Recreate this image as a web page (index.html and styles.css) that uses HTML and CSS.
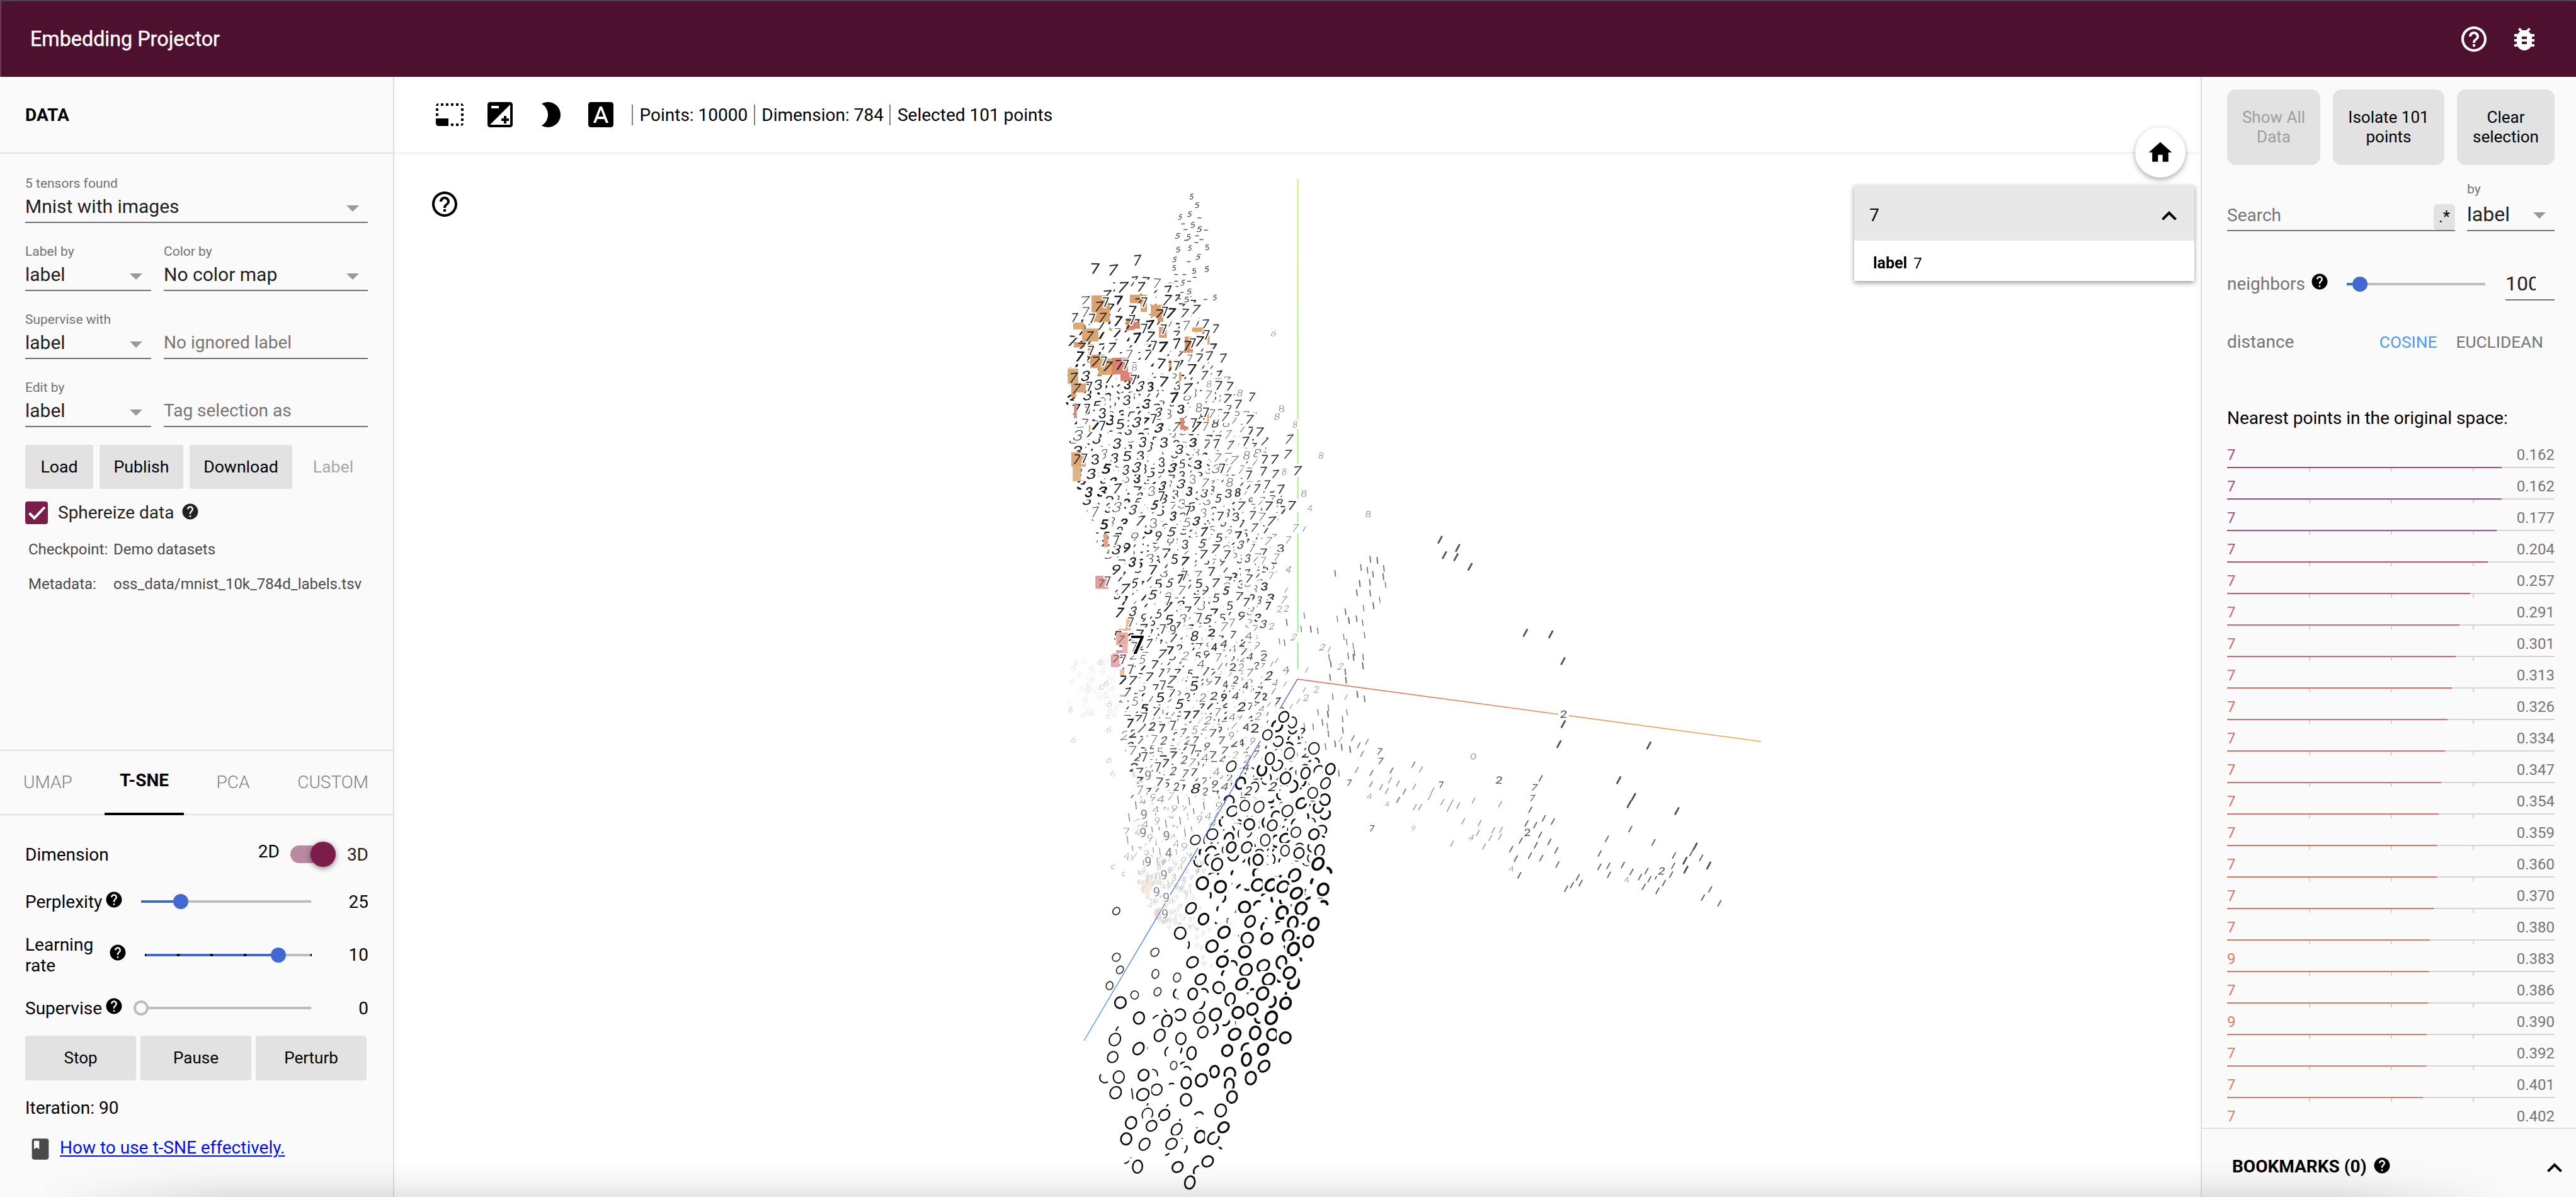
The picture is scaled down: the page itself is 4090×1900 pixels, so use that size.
FILE: index.html
```html
<!DOCTYPE html>
<html lang="en">
<head>
<meta charset="utf-8">
<title>Embedding Projector</title>
<link rel="stylesheet" href="styles.css">
</head>
<body>
<svg class="defs" width="0" height="0">
  <symbol id="help" viewBox="0 0 24 24"><path d="M12 2C6.48 2 2 6.48 2 12s4.48 10 10 10 10-4.48 10-10S17.52 2 12 2zm1 17h-2v-2h2v2zm2.07-7.75l-.9.92C13.45 12.9 13 13.5 13 15h-2v-.5c0-1.1.45-2.1 1.17-2.83l1.24-1.26c.37-.36.59-.86.59-1.41 0-1.1-.9-2-2-2s-2 .9-2 2H8c0-2.21 1.79-4 4-4s4 1.79 4 4c0 .88-.36 1.68-.93 2.25z"/></symbol>
  <symbol id="help-outline" viewBox="0 0 24 24"><path d="M11 18h2v-2h-2v2zm1-16C6.48 2 2 6.48 2 12s4.48 10 10 10 10-4.48 10-10S17.52 2 12 2zm0 18c-4.41 0-8-3.59-8-8s3.59-8 8-8 8 3.59 8 8-3.59 8-8 8zm0-14c-2.21 0-4 1.79-4 4h2c0-1.1.9-2 2-2s2 .9 2 2c0 2-3 1.75-3 5h2c0-2.25 3-2.5 3-5 0-2.21-1.79-4-4-4z"/></symbol>
  <symbol id="less" viewBox="0 0 24 24"><path d="M12 8l-6 6 1.41 1.41L12 10.83l4.59 4.58L18 14z"/></symbol>
</svg>

<header class="topbar">
  <h1>Embedding Projector</h1>
  <svg class="icon48"><use href="#help-outline"/></svg>
  <svg class="icon48" viewBox="0 0 24 24"><path d="M20 8h-2.81c-.45-.78-1.07-1.45-1.82-1.96L17 4.41 15.59 3l-2.17 2.17C12.96 5.06 12.49 5 12 5s-.96.06-1.41.17L8.41 3 7 4.41l1.62 1.63C7.88 6.55 7.26 7.22 6.81 8H4v2h2.09c-.05.33-.09.66-.09 1v1H4v2h2v1c0 .34.04.67.09 1H4v2h2.81c1.04 1.79 2.97 3 5.19 3s4.15-1.21 5.19-3H20v-2h-2.09c.05-.33.09-.66.09-1v-1h2v-2h-2v-1c0-.34-.04-.67-.09-1H20V8zm-6 8h-4v-2h4v2zm0-4h-4v-2h4v2z"/></svg>
</header>

<div class="app">
  <aside class="left">
    <h2 class="panel-title">DATA</h2>
    <section class="data">
      <div class="fields">
        <div class="field select"><label>5 tensors found</label><div class="value">Mnist with images<i></i></div></div>
      </div>
      <div class="fields two">
        <div class="field select"><label>Label by</label><div class="value">label<i></i></div></div>
        <div class="field select"><label>Color by</label><div class="value">No color map<i></i></div></div>
      </div>
      <div class="fields two">
        <div class="field select"><label>Supervise with</label><div class="value">label<i></i></div></div>
        <div class="field"><div class="value hint">No ignored label</div></div>
      </div>
      <div class="fields two">
        <div class="field select"><label>Edit by</label><div class="value">label<i></i></div></div>
        <div class="field"><div class="value hint">Tag selection as</div></div>
      </div>
      <div class="actions">
        <button>Load</button><button>Publish</button><button>Download</button><button class="flat">Label</button>
      </div>
      <div class="sphere">
        <span class="check"><svg viewBox="0 0 36 36"><path d="M6.500 18.500L14.500 26.500L31 9"/></svg></span>
        <span>Sphereize data</span>
        <svg class="help"><use href="#help"/></svg>
      </div>
      <dl class="meta">
        <dt>Checkpoint:</dt><dd>Demo datasets</dd>
        <dt>Metadata:</dt><dd>oss_data/mnist_10k_784d_labels.tsv</dd>
      </dl>
    </section>

    <section class="projections">
      <nav class="tabs"><span>UMAP</span><span class="active">T-SNE</span><span>PCA</span><span>CUSTOM</span></nav>
      <div class="tsne">
        <div class="row dim"><span class="grow">Dimension</span><span class="two-d">2D</span><span class="toggle"><b></b></span><span class="three-d">3D</span></div>
        <div class="row"><span class="name">Perplexity</span><svg class="help"><use href="#help"/></svg>
          <div class="slider"><div class="fill" style="width:23.3%"></div><b></b></div><span class="num">25</span></div>
        <div class="row tall"><span class="name">Learning rate</span><svg class="help"><use href="#help"/></svg>
          <div class="slider steps"><div class="fill" style="width:80%"></div><b></b></div><span class="num">10</span></div>
        <div class="row"><span class="name">Supervise</span><svg class="help"><use href="#help"/></svg>
          <div class="slider empty"><div class="fill" style="width:0%"></div><b></b></div><span class="num">0</span></div>
        <div class="run"><button>Stop</button><button>Pause</button><button>Perturb</button></div>
        <p class="iteration">Iteration: 90</p>
        <p class="guide"><svg viewBox="0 0 24 24"><path d="M18 2H6c-1.100 0-2 .9-2 2v16c0 1.100.9 2 2 2h12c1.100 0 2-.9 2-2V4c0-1.100-.9-2-2-2zM6 4h5v8l-2.500-1.500L6 12V4z"/></svg><a href="#tsne">How to use t-SNE effectively.</a></p>
      </div>
    </section>
  </aside>

  <main class="stage">
    <div class="toolbar">
      <svg class="icon48" viewBox="0 0 24 24"><path d="M23 15h-2v2h2v-2zm0-4h-2v2h2v-2zm0 8h-2v2c1 0 2-1 2-2zM15 3h-2v2h2V3zm8 4h-2v2h2V7zm-2-4v2h2c0-1-1-2-2-2zM3 21h8v-6H1v4c0 1.100.9 2 2 2zM3 7H1v2h2V7zm12 12h-2v2h2v-2zm4-16h-2v2h2V3zm0 16h-2v2h2v-2zM3 3C2 3 1 4 1 5h2V3zm0 8H1v2h2v-2zm8-8H9v2h2V3zM7 3H5v2h2V3z"/></svg>
      <svg class="icon48" viewBox="0 0 24 24"><path d="M15 17v2h2v-2h2v-2h-2v-2h-2v2h-2v2h2zm5-15H4c-1.100 0-2 .9-2 2v16c0 1.100.9 2 2 2h16c1.100 0 2-.9 2-2V4c0-1.100-.9-2-2-2zM5 5h6v2H5V5zm15 15H4L20 4v16z"/></svg>
      <svg class="icon48" viewBox="0 0 24 24"><path d="M10 2c-1.820 0-3.530.5-5 1.350C7.990 5.080 10 8.300 10 12s-2.010 6.920-5 8.650C6.470 21.500 8.180 22 10 22c5.520 0 10-4.480 10-10S15.520 2 10 2z"/></svg>
      <svg class="icon48" viewBox="0 0 24 24"><path d="M9.930 13.500h4.140L12 7.980zM20 2H4c-1.100 0-2 .9-2 2v16c0 1.100.9 2 2 2h16c1.100 0 2-.9 2-2V4c0-1.100-.9-2-2-2zm-4.050 16.500l-1.140-3H9.170l-1.120 3H5.960l5.110-13h1.860l5.110 13h-2.090z"/></svg>
      <div class="stats"><span>Points: 10000</span><span>Dimension: 784</span><span>Selected 101 points</span></div>
    </div>
    <div class="plot">
      <canvas id="scatter" width="2868" height="1656"></canvas>
      <svg class="icon48 plot-help"><use href="#help-outline"/></svg>
      <button class="home"><svg viewBox="0 0 24 24"><path d="M10 20v-6h4v6h5v-8h3L12 3 2 12h3v8z"/></svg></button>
      <div class="card">
        <div class="card-head"><span>7</span><svg class="icon48"><use href="#less"/></svg></div>
        <div class="card-body"><b>label</b><span>7</span></div>
      </div>
    </div>
  </main>

  <aside class="right">
    <section class="inspector">
      <div class="sel-actions"><button class="off">Show All Data</button><button>Isolate 101 points</button><button>Clear selection</button></div>
      <div class="search-row">
        <div class="search"><span>Search</span><em>.*</em></div>
        <div class="field select by"><label>by</label><div class="value">label<i></i></div></div>
      </div>
      <div class="neighbors"><span>neighbors</span><svg class="help"><use href="#help"/></svg>
        <div class="slider"><div class="fill" style="width:9.5%"></div><b></b></div>
        <div class="count"><span>100</span></div></div>
      <div class="distance"><span class="grow">distance</span><span class="on">COSINE</span><span>EUCLIDEAN</span></div>
      <p class="nn-title">Nearest points in the original space:</p>
      <div class="nn" id="nn"></div>
    </section>
    <section class="bookmarks"><b>BOOKMARKS (0)</b><svg class="help"><use href="#help"/></svg><svg class="icon48"><use href="#less"/></svg></section>
  </aside>
</div>
<div class="shade"></div>
<script src="plot.js"></script>
</body>
</html>
```
FILE: styles.css
```css
* { box-sizing: border-box; margin: 0; padding: 0; }
body { width: 4090px; height: 1900px; overflow: hidden; background: #fff; color: #000; font: 28px/36px Roboto, sans-serif; display: flex; flex-direction: column; }
.defs { position: absolute; }
button { border: 0; background: #e2e2e2; border-radius: 4px; color: #000; font: 26.67px/31px Roboto, sans-serif; }
.icon48 { width: 48px; height: 48px; flex: none; fill: currentColor; }
.help { width: 30px; height: 30px; flex: none; margin-bottom: 7px; fill: currentColor; }
.grow { flex: 1; }

.topbar { height: 122px; flex: none; display: flex; align-items: center; gap: 32px; padding: 2px 58px 0 46px; background: #4d102f; border-left: 2px solid #6a3b55; color: #fff; box-shadow: inset 0 2px #464646; }
.topbar h1 { flex: 1; font: 400 32.300px/40px Roboto, sans-serif; -webkit-text-stroke: .4px #fff; }
.app { flex: 1; display: flex; min-height: 0; }

.left { width: 626px; flex: none; display: flex; flex-direction: column; background: #fafafa; border-right: 2px solid #ddd; }
.panel-title { height: 122px; flex: none; padding: 0 40px; border-bottom: 2px solid #e0e0e0; font: 700 28px/122px Roboto, sans-serif; }
.data { flex: 1; padding: 35px 40px 0; }
.fields { display: grid; grid-template-columns: 544px; height: 75px; margin-bottom: 33px; }
.fields.two { grid-template-columns: 200px 324px; gap: 20px; }
.field { display: flex; flex-direction: column; justify-content: flex-end; border-bottom: 2px solid #737373; }
.field label { margin-bottom: 7px; font-size: 21px; line-height: 24px; color: #737373; }
.field .value { display: flex; justify-content: space-between; align-items: center; height: 42px; padding: 0 14px 6px 0; font-size: 30px; color: #212121; }
.field .value i { margin-top: 5px; border: 10px solid transparent; border-top-color: #999; border-bottom: 0; }
.field .hint { font-size: 28px; color: #757575; }
.actions { display: flex; gap: 10px; margin-top: -5px; }
.actions button { height: 70px; width: 108px; }
.actions button:nth-child(2) { width: 133px; }
.actions button:nth-child(3) { width: 163px; }
.actions .flat { width: 110px; background: none; color: #a8a8a8; }
.sphere { display: flex; align-items: center; height: 36px; margin-top: 20px; color: #212121; }
.check { width: 36px; height: 36px; margin-right: 16px; background: #7b1d4b; border-radius: 4px; }
.check svg { display: block; fill: none; stroke: #fff; stroke-width: 4; }
.sphere .help { margin-left: 11px; margin-bottom: 4px; }
.meta { display: grid; grid-template-columns: 135px 1fr; margin-top: 13px; padding-left: 5px; font-size: 24px; line-height: 54.500px; color: #4a4a4a; white-space: nowrap; }

.projections { height: 710px; flex: none; border-top: 2px solid #e0e0e0; }
.tabs { display: flex; justify-content: space-between; height: 102px; padding: 0 15px 0 13px; border-bottom: 2px solid #e0e0e0; color: #808080; line-height: 100px; font-weight: 300; }
.tabs span { padding: 0 24px; }
.tabs .active { height: 102px; border-bottom: 4px solid #000; color: #000; font-weight: 700; line-height: 94px; }
.tsne { padding: 22px 39px 0 40px; }
.row { display: flex; align-items: center; height: 70px; line-height: 33px; }
.row.dim { height: 80px; }
.row.tall { height: 99px; }
.two-d { margin: 0 17px 10px 0; }
.three-d { color: #212121; }
.toggle { width: 72px; height: 28px; margin-right: 18px; background: #b98aa2; border-radius: 14px; display: flex; justify-content: flex-end; align-items: center; }
.toggle b { width: 40px; height: 40px; border-radius: 50%; background: #7b1d4b; box-shadow: 0 2px 8px rgba(0,0,0,.5); }
.name { width: 126px; }
.tall .name { width: 132px; }
.slider { width: 270px; height: 4px; margin-left: 28px; display: flex; align-items: center; background: #bdbdbd; }
.slider .fill { height: 4px; background: #4268d2; }
.slider b { width: 24px; height: 24px; flex: none; margin-left: -12px; border-radius: 50%; background: #4268d2; }
.steps { width: 265px; background: radial-gradient(circle, #000 2px, transparent 2.500px) -26.500px 0/53px 4px, #bdbdbd; }
.steps .fill { background: radial-gradient(circle, #000 2px, transparent 2.500px) -26.500px 0/53px 4px, #4268d2; }
.empty b { background: #fafafa; border: 4px solid #bdbdbd; }
.num { flex: 1; text-align: right; }
.run { display: flex; gap: 7px; margin-top: 9px; }
.run button { width: 176px; height: 71px; font-size: 26px; }
.iteration { line-height: 88px; }
.guide { display: flex; align-items: center; height: 37px; padding-left: 4px; }
.guide svg { width: 40px; height: 40px; margin: 4px 11px 0 0; fill: #4a4a4a; }
.guide a { color: #0010f5; text-underline-offset: 3px; text-decoration-thickness: 2px; }

.stage { width: 2868px; flex: none; display: flex; flex-direction: column; }
.toolbar { height: 122px; flex: none; display: flex; align-items: center; gap: 32px; padding-left: 64px; border-bottom: 2px solid #eee; }
.stats { display: flex; margin-left: -7px; line-height: 33px; }
.stats span { padding: 0 9.500px 0 10.500px; border-left: 2px solid #808080; }
.plot { position: relative; flex: 1; }
#scatter { display: block; }
.plot-help { position: absolute; left: 56px; top: 56px; }
.home { position: absolute; left: 2764px; top: -42px; width: 80px; height: 80px; display: flex; align-items: center; justify-content: center; border-radius: 50%; background: #fff; box-shadow: 0 3px 8px rgba(0,0,0,.35); }
.home svg { width: 44px; height: 44px; }
.card { position: absolute; left: 2318px; top: 50px; width: 540px; background: #fff; box-shadow: 0 3px 8px rgba(0,0,0,.4); }
.card-head { height: 88px; display: flex; align-items: center; justify-content: space-between; padding: 8px 16px 0 24px; background: #e8e8e8; }
.card-head svg { margin-top: 2px; }
.card-body { height: 64px; display: flex; gap: 10px; padding: 18px 30px; font-size: 24px; }
.card-body b { font-size: 25px; }

.right { flex: 1; display: flex; flex-direction: column; background: #fafafa; border-left: 2px solid #ddd; }
.inspector { height: 1668px; flex: none; overflow: hidden; padding: 20px 34px 0 40px; color: #757575; }
.sel-actions { display: flex; gap: 20px; height: 120px; }
.sel-actions button { width: 155px; border-radius: 14px; font-size: 26px; padding: 0 20px; }
.sel-actions button:nth-child(1) { width: 148px; }
.sel-actions button:nth-child(2) { width: 177px; }
.sel-actions .off { color: #9d9d9d; }
.search-row { display: flex; gap: 19px; height: 105px; align-items: flex-end; }
.search { width: 362px; display: flex; align-items: flex-end; justify-content: space-between; border-bottom: 2px solid #737373; line-height: 46px; }
.search em { width: 34px; height: 41px; border-radius: 6px; background: #e2e2e2; color: #000; text-align: center; font: 26px/40px Roboto, sans-serif; }
.by { flex: 1; }
.by label { margin-bottom: 5px; }
.by .value { height: 48px; padding-bottom: 3px; font-size: 32px; }
.neighbors { display: flex; align-items: center; height: 167px; }
.neighbors .help { margin-left: 8px; color: #000; }
.neighbors .slider { width: 220px; }
.count { width: 78px; height: 52px; margin-left: auto; border-bottom: 2px solid #737373; color: #212121; font-size: 32px; line-height: 50px; }
.count span { display: block; width: 48px; overflow: hidden; }
.distance { display: flex; line-height: 18px; padding-right: 18px; }
.distance .on { color: #4b9bf3; margin-right: 30px; }
.distance span + span { font-size: 26.300px; }
.nn-title { margin-top: 93px; color: #000; line-height: 38px; }
.nn { margin-top: 10px; font-size: 24px; }
.nn div { display: flex; flex-wrap: wrap; justify-content: space-between; height: 56px; margin-bottom: -6px; padding-top: 11px; line-height: 37px; }
.nn u { width: 520px; height: 8px; background: linear-gradient(#d4d4d4, #d4d4d4) 0 0/520px 2px no-repeat, linear-gradient(90deg, transparent 130px, #d4d4d4 130px 132px, transparent 132px 260px, #d4d4d4 260px 262px, transparent 262px 390px, #d4d4d4 390px 392px, transparent 392px); }
.nn u s { display: block; height: 2px; }
.bookmarks { flex: 1; display: flex; align-items: center; padding: 11px 10px 0 48px; border-top: 2px solid #e0e0e0; }
.bookmarks .help { margin: 0 auto 3px 10px; }
.bookmarks .icon48 { margin-bottom: -5px; }
.shade { position: fixed; left: 60px; right: 100px; bottom: 0; height: 60px; background: linear-gradient(rgba(0,0,0,0), rgba(0,0,0,.025) 45%, rgba(0,0,0,.1)); -webkit-mask-image: linear-gradient(90deg, transparent, #000 300px, #000 3650px, transparent); }
```
FILE: plot.js
```js
// Nearest neighbour list: label, distance, colour.
const neighbours = [[7,.162,'#b0457f'],[7,.162,'#b0457f'],[7,.177,'#b84880'],[7,.204,'#c24e78'],[7,.257,'#cf5a6c'],[7,.291,'#da6562'],[7,.301,'#dc675f'],[7,.313,'#dc6a60'],[7,.326,'#dc6c61'],[7,.334,'#dc6e61'],[7,.347,'#dc7062'],[7,.354,'#dc7162'],[7,.359,'#dc7263'],[7,.360,'#dc7363'],[7,.370,'#db7663'],[7,.380,'#db7963'],[9,.383,'#db7a63'],[7,.386,'#db7b63'],[9,.390,'#db7d63'],[7,.392,'#db7e63'],[7,.401,'#db8163'],[7,.402,'#db8163']];
document.getElementById('nn').innerHTML = neighbours.map(([l, d, c]) =>
  `<div><span style="color:${c}">${l}</span><span>${d.toFixed(3)}</span><u><s style="width:${((1 - d) * 100).toFixed(1)}%;background:${c}"></s></u></div>`).join('');

const ctx = document.getElementById('scatter').getContext('2d');
ctx.translate(-626, -244);
let seed = 20177;
const rnd = () => { seed = (seed * 1664525 + 1013904223) % 4294967296; return seed / 4294967296; };
const between = (a, b) => a + (b - a) * rnd();

// Each region of the cloud stores its points in local units.
const region = (ox, oy, sx, sy) => (x, y) => [ox + x * sx, oy + y * sy];
const A = region(1650, 270, .38265, .35714);
const B = region(1650, 820, .38265, .35714);
const C = region(1650, 1360, .38265, .34439);
const D = region(2100, 820, .45918, .40816);
const pairs = s => { const n = s.trim().split(/\s+/).map(Number), r = []; for (let i = 0; i < n.length; i += 2) r.push([n[i], n[i + 1]]); return r; };

// A sprite is an opaque white tile holding one handwritten digit.
function sprite(x, y, digit, size, grey, weight, tile = true) {
  if (tile) { ctx.fillStyle = '#fff'; ctx.fillRect(x - size / 2, y - size / 2, size, size); }
  const col = `rgb(${grey},${grey},${grey})`;
  ctx.save();
  ctx.translate(x, y);
  ctx.strokeStyle = ctx.fillStyle = col;
  ctx.lineCap = 'round';
  if (digit === '0' || digit === 'arc') {
    ctx.rotate(between(.1, .9));
    ctx.lineWidth = weight;
    ctx.beginPath();
    const start = digit === 'arc' ? between(0, 6) : 0;
    ctx.ellipse(0, 0, size * between(.26, .33), size * between(.33, .38), 0, start, digit === 'arc' ? start + between(.6, 2.6) : 7);
    ctx.stroke();
  } else if (digit === '1' || digit === '/') {
    ctx.rotate(digit === '1' ? -.12 : .5);
    ctx.lineWidth = weight;
    ctx.beginPath(); ctx.moveTo(0, -size * .33); ctx.lineTo(0, size * .33); ctx.stroke();
  } else {
    ctx.transform(between(.95, 1.3), between(-.15, .1), between(-.35, 0), 1, 0, 0);
    ctx.font = `${weight > 2.6 ? 700 : weight > 1.6 ? 400 : 300} ${size * .93}px Lato, sans-serif`;
    ctx.textAlign = 'center';
    ctx.fillText(digit, 0, size * .34);
  }
  ctx.restore();
}
function label(x, y, t, size = 20, col = '#222', w = 400) {
  ctx.font = `${w} ${size}px Roboto, sans-serif`;
  ctx.textAlign = 'center';
  ctx.lineWidth = 4; ctx.strokeStyle = '#fff'; ctx.lineJoin = 'round';
  ctx.strokeText(t, x, y + size * .355);
  ctx.fillStyle = col; ctx.fillText(t, x, y + size * .355);
}
function line(x1, y1, x2, y2, c1, c2) {
  const g = ctx.createLinearGradient(x1, y1, x2, y2);
  g.addColorStop(0, c1); g.addColorStop(1, c2);
  ctx.strokeStyle = g; ctx.lineWidth = 1.4; ctx.lineCap = 'butt';
  ctx.beginPath(); ctx.moveTo(x1, y1); ctx.lineTo(x2, y2); ctx.stroke();
}

line(2060.5, 284, 2060.5, 1062, '#b6f25a', '#7de87a');
line(2060, 1078, 2796, 1177, '#ef5d58', '#f2ab45');

// Faint cluster of sixes behind the cloud.
for (let i = 0; i < 60; i++) { const [x, y] = B(between(125, 340), between(625, 890)); sprite(x, y, '6', 14, 215 + 22 * rnd() | 0, 1, false); }
for (const [x, y] of pairs('130 855 142 990 290 945 290 1080 305 1140 258 755 278 740 292 830')) sprite(...B(x, y), '6', 15, 175, 1);

// Cloud outline: [y, left, right].
const outline = [[445,1812,1842],[485,1715,1905],[540,1705,1925],[600,1700,1948],[650,1706,1985],[700,1700,2005],[760,1708,2030],[820,1735,2035],[880,1768,2030],[940,1780,2018],[1000,1778,2000],[1060,1780,2005],[1120,1784,2035],[1180,1792,2075],[1240,1800,2105],[1300,1798,2108],[1360,1780,2105]];
const edges = y => {
  for (let i = 1; i < outline.length; i++) if (y <= outline[i][0]) {
    const [y0, a0, b0] = outline[i - 1], [y1, a1, b1] = outline[i], t = (y - y0) / (y1 - y0);
    return [a0 + (a1 - a0) * t, b0 + (b1 - b0) * t];
  }
  return [1790, 2100];
};
const pick = s => s[rnd() * s.length | 0];
const cloud = [];
for (let y = 450; y < 1370; y += 12) {
  const [l, r] = edges(y);
  const step = y < 600 ? 20 : 11.5;
  for (let x = l + between(0, 8); x < r; x += step) cloud.push([x + between(-8, 8), y + between(-8, 8), rnd()]);
}
cloud.sort((p, q) => p[2] - q[2]);
for (const [x, y] of cloud) {
  const diag = 2060 - (y - 1078) * .59;
  const u = (x - 1700) / 340;
  if (y > 1090 && x > diag + 5) {
    if (y > 1130) sprite(x, y, y < 1200 ? pick('00027') : rnd() < .3 ? 'arc' : '0', 25, 15, between(1.8, 3.3));
    else sprite(x, y, pick('224'), 20, 60, 1.5);
  } else if (y > 1260) {
    sprite(x, y, pick('1119497'), 18, 95 + (y - 1260) * .6 | 0, 1.3);
  } else {
    const kinds = y < 580 ? '7' : y < 850 ? (u + (850 - y) / 700 > .85 ? '7778' : '333357') : y < 1000 ? '33577779' : u > .6 ? '227749' : '777752';
    sprite(x, y, pick(kinds), 24.5 - u * 6 - (y > 1000 ? 2 : 0), 15 + u * 45 + (y > 1150 ? 35 : 0) | 0, between(1.3, 3.3) - u * .5);
  }
}

// Column of fives rising above the cloud.
for (const [x, y] of pairs('632 117 655 155 624 195 585 208 637 243 665 262 575 292 620 297 576 353 625 346 697 343 562 397 660 386 560 434 643 448 695 440 596 500 622 540 612 575 729 566')) sprite(...A(x, y), '5', 13, 40, 1.7);
for (const [x, y] of pairs('665 210 692 265 655 290 673 307 652 320 597 237 607 262 609 310 620 405 645 475 568 462 602 462 568 492 570 515 622 492 592 542 580 570 690 573')) { const p = A(x, y); ctx.fillStyle = '#555'; ctx.fillRect(p[0] - 3, p[1], 6, 1.5); }
for (const [x, y] of pairs('407 400 232 437 306 443 347 520 533 537 530 578')) sprite(...A(x, y), '7', 25, 25, 2);
for (const [x, y] of pairs('147 655 650 618 603 635 690 683 732 705 665 835 706 825 763 835 685 912 745 957 790 960 882 1008 825 1040 780 1015 872 1108 914 1163 1037 1195 1030 1262 857 1205 935 1285 976 1285 1072 1335 930 1338 978 1352 870 1355 903 1415 1003 1418 945 1398 1048 1490 952 1492 963 1560 697 1217 735 1215 772 1095')) sprite(...A(x, y), '7', 21, 45, 1.8);
for (const [x, y] of pairs('833 990 1006 1060 987 1095 1062 1130 1170 1268 1017 1340 1098 1437 1365 1528 395 877 705 950')) sprite(...A(x, y), '8', 15, 80, 1.4);
sprite(...A(973, 725), '6', 14, 90, 1.4);
sprite(...A(1124, 1502), '4', 15, 100, 1.4);
for (const [x, y] of pairs('1063 50 1033 103 985 180 962 262 930 195 1015 370')) sprite(...B(x, y), '7', 17, 80, 1.6);
for (const [x, y] of pairs('1035 235 1025 680')) sprite(...B(x, y), '4', 16, 60, 1.6);
for (const [x, y] of pairs('997 410 1026 408 1057 535 1250 665 1150 768 1107 805 1175 580 965 487')) sprite(...B(x, y), '2', 15, 90, 1.6);

// Highlighted neighbours: colour-tinted tiles.
const block = (f, s) => s.trim().split('\n').forEach(r => {
  const [x, y, w, h, c] = r.trim().split(' ');
  const [a, b] = f(+x, +y), [a2, b2] = f(+x + +w, +y + +h);
  ctx.fillStyle = c; ctx.fillRect(a, b, a2 - a, b2 - b);
});
block(A, `217 557 70 75 #dba26b
  225 632 68 43 #dba26b
  281 598 12 40 #dba26b
  376 554 71 38 #dba26b
  421 590 26 40 #dba26b
  463 599 60 52 #dca172
  490 650 25 24 #d9966b
  141 678 45 30 #dcaa75
  178 704 68 58 #dba571
  144 764 45 24 #d99c6b
  201 773 25 30 #d99c6b
  146 850 66 7 #dba571
  212 820 60 60 #d9996b
  246 838 66 72 #d9a86f
  301 834 67 74 #dc8270
  337 900 50 37 #dc8270
  118 882 47 67 #d9aa74
  133 948 60 40 #db9f76
  133 985 20 26 #db9f76
  144 1036 12 67 #de8f7c
  585 1101 16 53 #de8470
  585 1140 40 14 #de8470
  604 740 32 72 #d9966b
  580 793 58 18 #d9966b
  634 699 48 20 #dca56b
  698 735 9 40 #dca56b
  537 843 22 50 #dca56b
  580 893 10 65 #dca56b
  497 697 32 48 #da9870
  362 655 34 58 #d98f63
  383 675 35 30 #dc806f
  440 750 45 16 #dca56b
  133 1254 60 64 #dfa679
  139 1318 33 65 #dfb482
  290 700 13 14 #dca56b
  206 1134 6 30 #dca56b
  697 1062 7 56 #dca56b`);
block(B, `267 78 18 58 #e2a489
  233 263 54 58 #e69c9c
  361 450 20 56 #e9bb9b
  329 498 40 8 #e9bb9b
  319 515 49 56 #e8aea6
  345 570 22 38 #eeb0b0
  298 615 34 53 #d096c4
  303 608 30 55 #e8aea6
  319 594 26 12 #d096b4
  335 680 18 26 #e9c0a0
  335 792 22 9 #eeb0b0
  387 1137 12 22 #f2dcc8
  404 1173 26 10 #f2dcc8
  388 1350 18 6 #f2dcc8`);
for (const [x, y] of pairs('248 605 410 590 497 640 208 738 173 788 235 850 283 872 333 865 142 922 155 970 372 685 614 780 156 1285 548 872 262 655')) sprite(...A(x, y), '7', 23, 30, 2.4, false);
for (const [x, y] of pairs('168 828 387 625 327 670 458 690 546 635 406 745 460 740 571 770 513 785 664 760 452 820 506 860 633 885 516 940 580 865 615 970 560 1010 650 1140')) sprite(...A(x, y), '7', 24, 18, between(1.8, 3));
for (const [x, y] of pairs('193 914 420 960 232 1285 405 1120 262 1080 518 1210 323 1215 430 1208 405 1320')) sprite(...A(x, y), '3', 24, 20, 2.5);
for (const [x, y] of pairs('258 295 340 545 318 632')) sprite(...B(x, y), '7', 17, 90, 1.8, false);
for (const [x, y] of pairs('540 458 643 752 503 803 583 832 562 188')) sprite(...B(x, y), '5', 23, 20, 2.4);
for (const [x, y] of pairs('645 530 650 1208')) sprite(...B(x, y), '8', 23, 25, 2.2);
for (const [x, y] of pairs('868 1218 970 1200 840 845 953 707 895 940')) sprite(...B(x, y), '2', 21, 25, 2.4);

// Sparse ones right of the vertical axis.
for (const [x, y] of pairs('1374 190 1403 195 1335 226 1362 238 1385 256 1430 230 1428 267 1437 303 1330 297 1372 292 1318 338 1373 340 1413 370 1387 396 1346 407 1271 423 1285 462 1237 455 1317 454 1342 472 1350 527 1264 535 1276 558 1303 574 1282 620 1304 625 1344 625 1343 663 1308 605 1203 625 1210 655 1270 690 1273 727 1207 715 1320 790 1350 810 1218 800 1200 850 1157 870 1198 878 1277 870 1259 900 1175 915 1196 930 1137 935 1100 930 1260 950 1200 965 1188 1022 1228 1010 1255 1025 1290 1035 1243 1140 1087 500 1127 500 1156 508 1100 440 1027 470 1018 560 997 555 1228 252')) sprite(...B(x, y), '1', 14, 115, between(1.2, 2.2), false);
for (const [x, y] of pairs('1110 682 1100 770 1075 820 1045 845 1030 690 1020 745 1273 803 1025 327 1100 55 1203 590 1300 985 1325 1015 1360 1000 1338 1055 1318 1125 1380 1140 1460 1128 1377 1190 1418 1203 1488 1187 1515 1220 1488 1258 1555 1100 985 640 965 655 1250 990')) sprite(...B(x, y), '/', 13, 150, 1.2, false);
for (const [x, y] of pairs('406 90 467 122 421 150 461 158 510 195 701 452 789 458 831 562 832 807 817 885 1128 890 1024 1025 1075 1090 1060 1118 1225 1145 1288 1283 1253 1338 1335 1357 1256 1373')) sprite(...D(x, y), '/', 17, 80, 2.8, false);
for (const [x, y] of pairs('754 1018 614 1118 718 1140 765 1173 796 1186 705 1193 735 1200 752 1238 784 1265 808 1298 737 1278 717 1318 812 1353 685 1260 652 1293 668 1330 680 1395 756 1328 983 1253 958 1310 1064 1215 1144 1267 1215 1318 1275 1308 1309 1327 1212 1358 1205 1392 1120 1378 1068 1382 1038 1355 988 1358 990 1393 957 1362 1130 1410 1110 1440 1180 1425 1158 1455 1097 1402 1155 1398 882 1403 862 1433 892 1425 842 1447 1340 1450 1315 1482 1372 1504 522 1104 543 1192 486 1185 447 1272 558 1283 580 1250 617 1218 613 1245 590 1220 537 1230 414 1110 446 1112 469 1124 435 1136 380 1065 370 1090 319 1130 337 1130 317 1050 340 983 313 965 239 988 233 1025 260 1038 283 1070 222 1067 262 1102 202 1052 167 1040 168 997 118 985 137 922 153 876 125 890 105 862')) sprite(...D(x, y), '/', 15, x > 640 ? 95 : 135, x > 640 ? 1.8 : 1.3, false);
for (const [x, y] of pairs('197 913 200 950 92 1035 410 1042 725 1095 732 1053 170 1212')) sprite(...D(x, y), '7', 15, 70, 1.8);
for (const [x, y] of pairs('833 768 610 1024 1172 1378 708 1228')) sprite(...D(x, y), '2', 17, 70, 1.8);
for (const [x, y] of pairs('162 1088 223 1118 515 1248 653 1370 1052 1412')) sprite(...D(x, y), '4', 13, 100, 1.5);
sprite(...D(521, 933), '0', 12, 130, 1.1);
sprite(...D(314, 1212), '9', 13, 120, 1.1);

// Pale tiles and small grey digits in the lower left of the cloud.
block(C, `440 85 30 50 #f7e8dc
  410 108 85 20 #f7e8dc
  426 128 35 42 #f7e8dc
  442 170 18 25 #f7e8dc
  478 240 30 50 #f6e0d8
  507 285 28 22 #f7e8dc`);
for (let i = 0; i < 150; i++) { const y = between(0, 330), x = between(360 + y * .45, 690 - y * .1); sprite(...C(x, y), pick('9194c9'), between(10, 13), 160 + y * .12 | 0, 1, false); }
for (const [x, y] of pairs('655 333 655 372 652 410 680 352 705 338 672 420 680 465 685 495 712 505')) sprite(...C(x, y), '9', 11, 190, 1, false);
for (const [x, y] of pairs('308 42 350 75')) sprite(...C(x, y), 'c', 14, 110, 1.3, false);

// Lower cloud: partly covered zeros first, then the ones in front.
const under = pairs('720 100 760 85 820 80 910 75 955 75 990 70 800 150 835 155 870 130 940 190 985 190 1020 200 1120 165 1110 110 1150 120 1190 75 1125 215 1160 220 1175 230 725 240 760 240 800 245 910 230 960 270 1045 250 750 290 800 295 990 320 945 325 1105 330 815 325 815 385 770 410 990 385 1075 350 1005 435 1065 480 800 505 780 545 1000 550 970 620 1005 630 885 635 680 635 925 685 960 665 760 690 790 700 770 750 915 740 840 765 720 795 680 850 850 790 870 850 500 890 540 900 570 890 460 900 580 630 540 690 490 755 690 180 750 190 600 405 665 680 470 1005 275 1015 545 1070 605 970 610 995 800 965 860 885 605 1215 660 1200 675 1240 765 1320 605 1275 590 1345 525 1350 545 1160 430 1135 360 1388 662 1450 340 800 820 1125');
for (const [x, y] of under) sprite(...C(x, y), 'arc', 26, 15, 2 + Math.max(0, x - 450) / 320);
const zeros = pairs('910 15 1157 32 738 35 1060 85 677 122 752 138 907 130 962 130 1012 138 1178 150 1067 168 630 237 852 232 1008 257 1087 238 682 287 875 298 1138 310 1052 305 585 352 767 348 863 376 945 377 1033 365 1116 390 717 412 853 438 1055 425 636 486 760 483 930 502 1005 486 858 521 670 565 745 603 840 587 952 565 1055 583 1038 535 637 632 927 630 1022 675 792 657 414 743 584 728 664 742 731 727 884 702 963 742 825 718 530 758 500 823 588 838 679 808 811 818 896 812 967 820 1021 834 412 884 632 905 780 893 929 888 860 934 933 965 433 1006 727 990 791 1000 878 1020 610 1042 673 1030 487 1073 789 1052 430 1096 609 1120 800 1107 753 1169 449 1186 519 1190 570 1257 668 1290 723 1297 765 1247 549 1323 437 1325 408 1428 574 1430 699 1404 625 1501 337 672 314 842 330 1015 361 1300 317 1087 305 923 381 1226 466 1240');
for (const [x, y] of zeros) sprite(...C(x, y), '0', 27, 12, 2.1 + Math.max(0, x - 480) / 380 + between(-.3, .6));
for (const [x, y] of pairs('320 250 320 463 292 594 396 637 491 622 482 540 480 440 335 521 572 556 558 962')) sprite(...C(x, y), '0', 19, 40, 1.7);
for (const [x, y] of pairs('853 1285 912 1290 872 1368 967 1372 1065 1403 938 1438 797 1470 1020 1485 1078 1495 648 1437 718 1412 1140 1412 1185 1258 1135 1228 1188 1185 1030 1308 1208 1122 1105 1140 1022 1162 1140 1030 1038 1052 957 1075 947 970 1050 915 1015 890 797 1110 908 1525')) sprite(...B(x, y), '0', 25, 15, between(1.8, 3));
sprite(...C(386, 1092), '1', 24, 30, 2, false);

line(2060, 1078, 2034, 1122, '#5a4be0', '#4a5ae6');
line(2001, 1176, 1911, 1331, '#3c5be8', '#3a66ea');
line(1902, 1346, 1721, 1652, '#3a66ea', '#4a96f2');

// Text labels of the selected points.
for (const [x, y] of pairs('277 587 436 587 522 630 386 667 220 660 436 705 517 708 695 733 476 782 637 770 215 803 269 850 359 864 571 870 392 933 208 962 199 1062 692 1078 642 1126 262 1137 475 1105 187 1281 508 1450 617 1515 759 1327')) label(...A(x, y), '7');
for (const [x, y] of pairs('320 105 284 287 380 470 603 262 663 450 513 500 395 580 348 635 535 375 380 680 513 750 437 893 437 1070 555 930 637 1035 493 1115')) label(...B(x, y), '7', 20, '#444');
label(...B(555, 505), '9', 20, '#444');
for (const [x, y] of pairs('452 1150 435 1325 431 1405 528 1420 452 1535')) label(...B(x, y), '9', 20, '#7a7a7a');
label(...B(537, 1495), '4', 20, '#7a7a7a');
for (const [x, y] of pairs('518 85 487 162 527 188 522 264')) label(...C(x, y), '9', 20, '#858585');
label(...B(408, 570), '7', 40, '#000', 500);
```
